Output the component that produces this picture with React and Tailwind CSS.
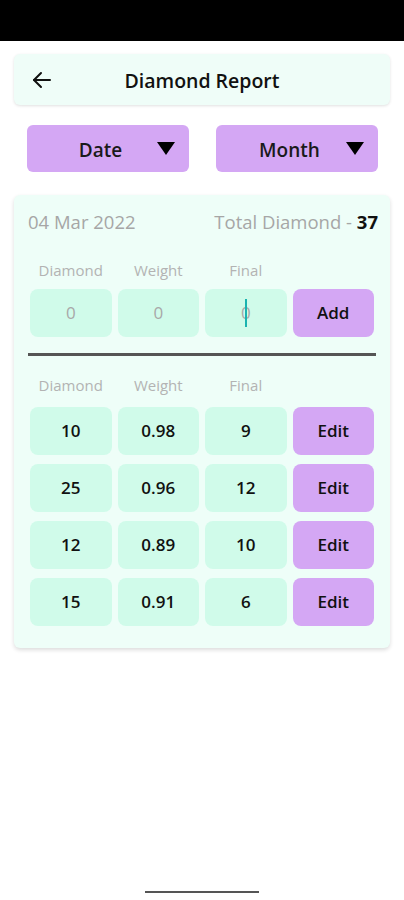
import React from "react";

const rows = [
  { diamond: "10", weight: "0.98", final: "9" },
  { diamond: "25", weight: "0.96", final: "12" },
  { diamond: "12", weight: "0.89", final: "10" },
  { diamond: "15", weight: "0.91", final: "6" },
];

function Labels() {
  return (
    <div className="grid grid-cols-4 gap-[6px] px-4 text-[15px] leading-5 text-[#b3b3b3] text-center">
      <span>Diamond</span>
      <span>Weight</span>
      <span>Final</span>
      <span></span>
    </div>
  );
}

function Dropdown({ label }) {
  return (
    <button className="relative h-[47px] rounded-md bg-[#d4a7f4] pr-[15px] pt-[3px] text-[19px] font-semibold text-[#1a1a1a] flex items-center justify-center">
      <span>{label}</span>
      <svg
        className="absolute right-[14px] top-[17px]"
        width="18"
        height="13"
        viewBox="0 0 18 13"
      >
        <path d="M0 0H18L9 13Z" fill="#000" />
      </svg>
    </button>
  );
}

export default function App() {
  return (
    <div
      className="h-[900px] bg-white flex flex-col"
      style={{ fontFamily: '"Open Sans", "Noto Sans", sans-serif' }}
    >
      {/* status bar */}
      <div className="h-[41px] bg-black"></div>

      {/* header */}
      <div className="mx-[14px] mt-[13px] h-[51px] rounded-md bg-[#effdf8] shadow-[0_1px_3px_rgba(0,0,0,0.12)] flex items-center px-[18px]">
        <svg width="20" height="18" viewBox="0 0 20 18" fill="none" stroke="#111" strokeWidth="2" strokeLinecap="round" strokeLinejoin="round">
          <path d="M18 9H2" />
          <path d="M9 2L2 9L9 16" />
        </svg>
        <h1 className="flex-1 pt-[3px] text-center text-[19.5px] font-semibold text-[#111] pr-[20px]">
          Diamond Report
        </h1>
      </div>

      {/* dropdowns */}
      <div className="mt-[20px] grid grid-cols-2 gap-[27px] pl-[27px] pr-[26px]">
        <Dropdown label="Date" />
        <Dropdown label="Month" />
      </div>

      {/* report card */}
      <div className="mx-[14px] mt-[23px] rounded-md bg-[#eefef8] shadow-[0_2px_4px_rgba(0,0,0,0.14)] pt-[15px] pb-[22px]">
        <div className="flex items-center justify-between pl-[14px] pr-[12px] text-[18.5px] leading-6 text-[#a6a6a6]">
          <span>04 Mar 2022</span>
          <span>
            Total Diamond - <span className="font-bold text-[#111]">37</span>
          </span>
        </div>

        <div className="mt-[26px]">
          <Labels />
        </div>

        <div className="mt-[9px] grid grid-cols-4 gap-[6px] px-4 text-[17px]">
          <div className="h-12 rounded-lg bg-[#d0fbea] flex items-center justify-center text-[#a8a8a8]">0</div>
          <div className="h-12 rounded-lg bg-[#d0fbea] flex items-center justify-center text-[#a8a8a8]">0</div>
          <div className="relative h-12 rounded-lg bg-[#d0fbea] flex items-center justify-center text-[#a8a8a8]">
            0
            <span className="absolute left-[40px] top-[10px] h-[28px] w-[2px] bg-[#1ab3b0]"></span>
          </div>
          <button className="h-12 rounded-lg bg-[#d4a7f4] font-semibold text-[#111]">Add</button>
        </div>

        <div className="mx-[14px] mt-[16px] h-[3px] bg-[#555]"></div>

        <div className="mt-[19px]">
          <Labels />
        </div>

        <div className="mt-[12px] flex flex-col gap-[9px] px-4">
          {rows.map((r, i) => (
            <div key={i} className="grid grid-cols-4 gap-[6px] text-[17px] font-semibold text-[#111]">
              <div className="h-12 rounded-lg bg-[#d0fbea] flex items-center justify-center">{r.diamond}</div>
              <div className="h-12 rounded-lg bg-[#d0fbea] flex items-center justify-center">{r.weight}</div>
              <div className="h-12 rounded-lg bg-[#d0fbea] flex items-center justify-center">{r.final}</div>
              <button className="h-12 rounded-lg bg-[#d4a7f4]">Edit</button>
            </div>
          ))}
        </div>
      </div>

      {/* home indicator */}
      <div className="mt-auto mb-[7px] mx-auto h-[2px] w-[114px] bg-[#555]"></div>
    </div>
  );
}
